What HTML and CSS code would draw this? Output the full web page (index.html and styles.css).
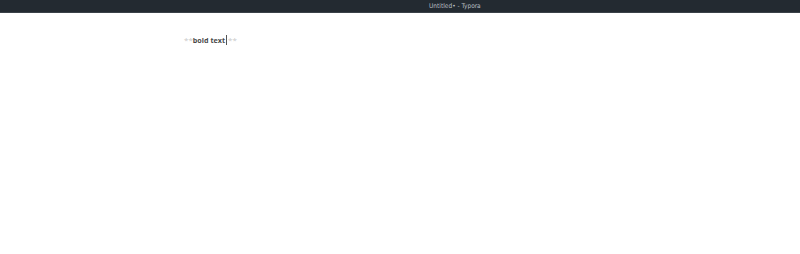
FILE: index.html
```html
<!DOCTYPE html>
<html lang="en">
<head>
  <meta charset="UTF-8">
  <title>Untitled• - Typora</title>
  <link rel="stylesheet" href="styles.css">
</head>
<body>
  <div class="titlebar">
    <span class="title">Untitled• - Typora</span>
  </div>
  <div class="editor">
    <p class="line"><span class="md-mark">**</span><strong>bold text</strong><span class="cursor"></span><span class="md-mark">**</span></p>
  </div>
</body>
</html>
```

FILE: styles.css
```css
body {
  margin: 0;
  padding: 0;
  background: #ffffff;
  font-family: "Open Sans", sans-serif;
}
.titlebar {
  height: 13px;
  background-color: #232a31;
  border-bottom: 1px solid #3a4148;
  box-sizing: border-box;
  display: flex;
  align-items: center;
  padding-left: 429px;
}
.title {
  color: #b9bec3;
  font-family: "DejaVu Sans Condensed", "DejaVu Sans", sans-serif;
  font-stretch: condensed;
  font-size: 6.5px;
  line-height: 13px;
}
.editor {
  padding: 21px 0 0 184px;
}
.line {
  margin: 0;
  font-size: 7.2px;
  line-height: 12px;
  color: #4a4a4a;
}
.line strong {
  font-weight: bold;
}
.md-mark {
  color: #c8c8c8;
  font-size: 8px;
}
.cursor {
  display: inline-block;
  width: 1px;
  height: 10px;
  background: #555555;
  vertical-align: -2px;
  margin: 0 1px;
}
```
